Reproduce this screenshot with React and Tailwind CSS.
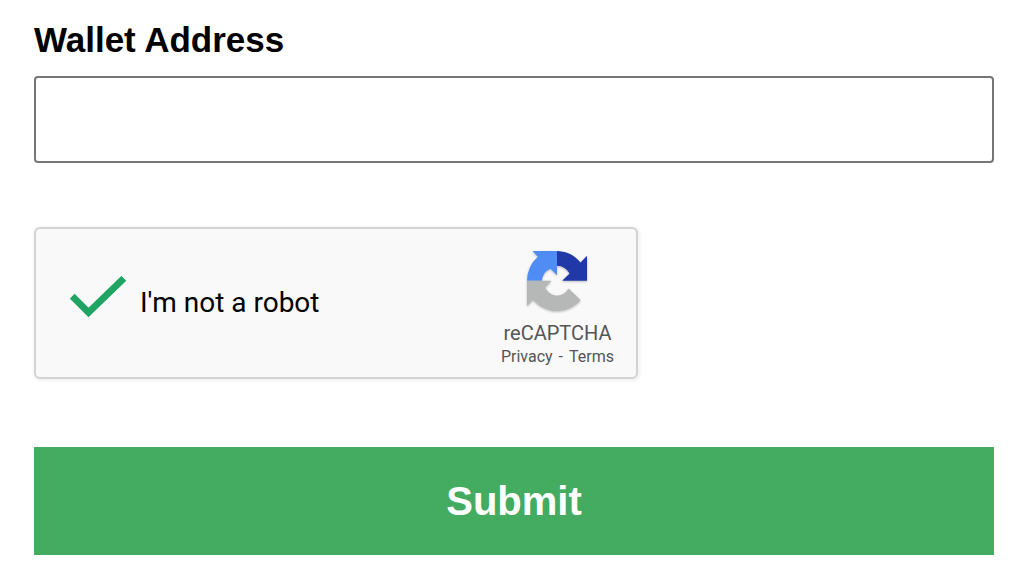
function CheckMark() {
  return (
    <svg viewBox="0 0 56 42" className="pointer-events-none col-start-1 row-start-1 h-[42px] w-14" fill="none" aria-hidden="true">
      <path d="M2.2 20.2 18.5 36.5 53.8 2.3" stroke="#1fa463" strokeWidth="6.8" />
    </svg>
  );
}

function RecaptchaLogo() {
  return (
    <svg viewBox="41 36 176 176" className="size-15 drop-shadow-[0_1px_1px_rgba(0,0,0,0.25)]" aria-hidden="true">
      <path fill="#4f8df5" d="M57 36H129V107L110 88Q86 98 85 123H41Q42 80 73 53Z" />
      <path fill="#2139a6" d="M129 36C158 37 181 48 198 70L217 50V123H144L166 102Q154 80 129 79Z" />
      <path fill="#b5b8b7" d="M41 123H113L94 143C111 174 146 174 163 146L198 180C163 223 96 223 59 179L41 197Z" />
    </svg>
  );
}

export default function App() {
  return (
    <form className="flex flex-col pt-4 pr-7 pb-8 pl-[34px] font-['Liberation_Sans',Arial,sans-serif] text-black" onSubmit={(e) => e.preventDefault()}>
      <label htmlFor="wallet" className="text-[35px] leading-12 font-bold">Wallet Address</label>
      <input id="wallet" type="text" className="mt-3 h-[87px] w-full rounded-[4px] border-2 border-[#767676] bg-white px-4 text-3xl outline-none" />

      <div className="mt-16 flex h-38 w-full max-w-[604px] justify-between rounded-[6px] border-2 border-[#d3d3d3] bg-[#f9f9f9] pr-[22px] pl-[34px] font-[Roboto,sans-serif] shadow-[1px_1px_3px_1px_rgba(0,0,0,0.06)]">
        <label className="flex items-center gap-3.5 text-[28px] leading-8">
          <span className="grid place-items-center pb-3">
            <input type="checkbox" defaultChecked className="col-start-1 row-start-1 size-14 appearance-none outline-none" />
            <CheckMark />
          </span>
          <span>I'm not a robot</span>
        </label>
        <div className="flex flex-col items-center pt-[22px] text-[#555555]">
          <RecaptchaLogo />
          <div className="mt-2 text-xl leading-7">reCAPTCHA</div>
          <div className="flex gap-1.5 text-base leading-5">
            <a href="#privacy">Privacy</a>
            <span>-</span>
            <a href="#terms">Terms</a>
          </div>
        </div>
      </div>

      <button type="submit" className="mt-17 h-27 w-full bg-[#43ac60] text-[40px] font-bold text-white">Submit</button>
    </form>
  );
}
